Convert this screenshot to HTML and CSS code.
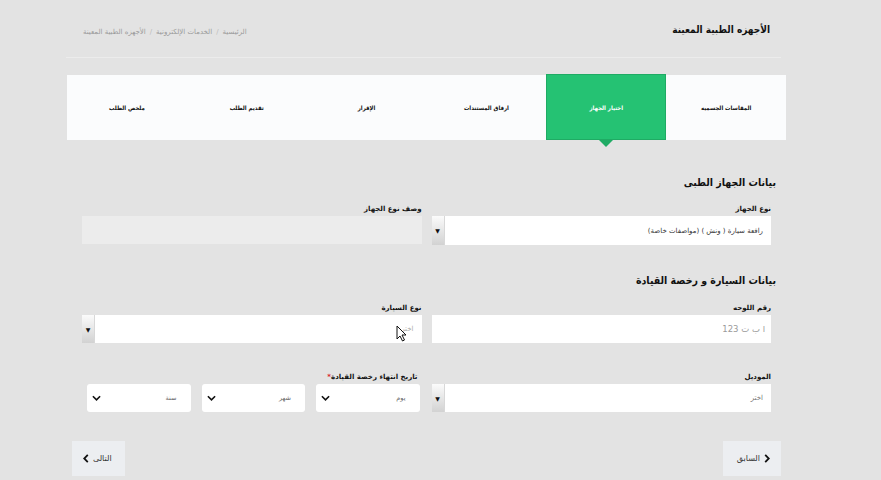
FILE: index.html
```html
<!DOCTYPE html>
<html lang="ar" dir="rtl">
<head>
<meta charset="utf-8">
<title>الأجهزه الطبية المعينة</title>
<link rel="stylesheet" href="styles.css">
</head>
<body>
<div class="page">
  <header class="top">
    <h1 class="title">الأجهزه الطبية المعينة</h1>
    <nav class="crumbs">
      <span>الرئيسية</span><span class="sep">/</span><span>الخدمات الإلكترونية</span><span class="sep">/</span><span>الأجهزه الطبية المعينة</span>
    </nav>
  </header>

  <ol class="steps">
    <li>المقاسات الجسميه</li>
    <li class="active">اختيار الجهاز</li>
    <li>ارفاق المستندات</li>
    <li>الإقرار</li>
    <li>تقديم الطلب</li>
    <li>ملخص الطلب</li>
  </ol>

  <section class="form">
    <h2 class="heading">بيانات الجهاز الطبى</h2>
    <div class="row row-first">
      <div class="field">
        <label class="label">نوع الجهاز</label>
        <div class="combo">
          <span class="value">رافعة سيارة ( ونش ) (مواصفات خاصة)</span>
          <span class="combo-btn">▼</span>
        </div>
      </div>
      <div class="field">
        <label class="label">وصف نوع الجهاز</label>
        <div class="input disabled"></div>
      </div>
    </div>

    <h2 class="heading heading-second">بيانات السيارة و رخصة القيادة</h2>
    <div class="row row-second">
      <div class="field">
        <label class="label">رقم اللوحه</label>
        <div class="input"><span class="placeholder">ا ب ت 123</span></div>
      </div>
      <div class="field">
        <label class="label">نوع السيارة</label>
        <div class="combo">
          <span class="value faint">اختر</span>
          <span class="combo-btn">▼</span>
        </div>
      </div>
    </div>

    <div class="row">
      <div class="field">
        <label class="label">الموديل</label>
        <div class="combo">
          <span class="value muted">اختر</span>
          <span class="combo-btn">▼</span>
        </div>
      </div>
      <div class="field">
        <label class="label date-label">تاريخ انتهاء رخصة القيادة<span class="req">*</span></label>
        <div class="dates">
          <div class="dsel"><span>يوم</span><svg class="chev" viewBox="0 0 10 6" width="9" height="6"><path d="M1 1l4 4 4-4" fill="none" stroke="#111" stroke-width="1.8"/></svg></div>
          <div class="dsel"><span>شهر</span><svg class="chev" viewBox="0 0 10 6" width="9" height="6"><path d="M1 1l4 4 4-4" fill="none" stroke="#111" stroke-width="1.8"/></svg></div>
          <div class="dsel"><span>سنة</span><svg class="chev" viewBox="0 0 10 6" width="9" height="6"><path d="M1 1l4 4 4-4" fill="none" stroke="#111" stroke-width="1.8"/></svg></div>
        </div>
      </div>
    </div>
  </section>

  <div class="actions">
    <button class="btn btn-prev"><svg class="bchev" viewBox="0 0 6 10" width="6" height="9"><path d="M1 1l4 4-4 4" fill="none" stroke="#111" stroke-width="2"/></svg><span>السابق</span></button>
    <button class="btn btn-next"><span>التالى</span><svg class="bchev" viewBox="0 0 6 10" width="6" height="9"><path d="M5 1L1 5l4 4" fill="none" stroke="#111" stroke-width="2"/></svg></button>
  </div>

  <svg class="cursor" viewBox="0 0 11 17" width="11" height="17"><path d="M1 1v13l3-3 2.5 5 2-1-2.5-5h4z" fill="#fff" stroke="#111" stroke-width="1"/></svg>
</div>
</body>
</html>
```
FILE: styles.css
```css
html, body {
  margin: 0;
  padding: 0;
}
body {
  background: #e3e3e3;
  font-family: "DejaVu Sans", "Liberation Sans", sans-serif;
  color: #111;
  width: 881px;
  height: 480px;
  overflow: hidden;
}
.page {
  position: relative;
  direction: rtl;
  width: 881px;
  height: 480px;
}
.top {
  margin: 0 100px 0 66px;
  height: 58px;
  padding: 0 11px 0 17px;
  box-sizing: border-box;
  border-bottom: 1px solid #ececec;
  display: flex;
  align-items: center;
  justify-content: space-between;
}
.title {
  margin: 1px 0 0 0;
  font-size: 10px;
  font-stretch: condensed;
  font-weight: bold;
  color: #111;
}
.crumbs {
  margin-top: 7px;
  font-size: 7px;
  color: #9a9a9a;
  display: flex;
  gap: 4px;
}
.crumbs .sep {
  color: #bbb;
}
.steps {
  list-style: none;
  margin: 17px 95px 0 67px;
  padding: 0;
  height: 65px;
  background: #fbfcfd;
  display: flex;
}
.steps li {
  flex: 1;
  display: flex;
  align-items: center;
  justify-content: center;
  font-size: 6px;
  font-stretch: condensed;
  font-weight: bold;
  color: #111;
}
.steps li.active {
  position: relative;
  background: #25c273;
  box-shadow: inset 0 0 0 1px #1fab64;
  color: #fff;
  margin-top: -1px;
}
.steps li.active::after {
  content: "";
  position: absolute;
  bottom: -7px;
  left: 50%;
  transform: translateX(-50%);
  border-left: 7px solid transparent;
  border-right: 7px solid transparent;
  border-top: 7px solid #1fab64;
}
.form {
  margin: 34px 110px 0 82px;
}
.heading {
  margin: 0 -5px 13px 0;
  font-size: 10.5px;
  font-stretch: condensed;
  line-height: 16px;
  font-weight: bold;
  color: #111;
}
.heading-second {
  margin-top: 27px;
  margin-bottom: 14px;
}
.row {
  display: grid;
  grid-template-columns: 1fr 1fr;
  column-gap: 10px;
}
.row-second {
  margin-bottom: 28px;
}
.label {
  display: block;
  height: 12px;
  line-height: 12px;
  margin-bottom: 1px;
  font-size: 7px;
  font-weight: bold;
  color: #111;
}
.req {
  color: #d9262c;
}
.combo, .input {
  height: 28px;
  background: #fff;
  display: flex;
  align-items: center;
  justify-content: space-between;
  box-sizing: border-box;
}
.row-first .combo {
  height: 29px;
}
.input.disabled {
  background: #ececec;
}
.value {
  padding-right: 8px;
  font-size: 7px;
  color: #333;
}
.value.muted {
  color: #777;
}
.value.faint {
  color: #aaa;
}
.placeholder {
  padding-right: 6px;
  font-size: 8.5px;
  color: #9a9a9a;
}
.combo-btn {
  width: 12px;
  align-self: stretch;
  background: linear-gradient(#fbfbfb, #d2d2d2);
  border-right: 1px solid #d8d8d8;
  display: flex;
  align-items: center;
  justify-content: center;
  font-size: 6px;
  color: #111;
}
.dates {
  display: grid;
  grid-template-columns: 1fr 1fr 1fr;
  column-gap: 11px;
  padding: 0 2px 0 5px;
}
.date-label {
  padding-right: 4px;
}
.dsel {
  height: 28px;
  background: #fff;
  border-radius: 3px;
  display: flex;
  align-items: center;
  justify-content: space-between;
  padding: 0 14px 0 5px;
  font-size: 6.5px;
  color: #666;
}
.chev {
  display: block;
}
.actions {
  margin: 29px 100px 0 72px;
  display: flex;
  justify-content: space-between;
}
.btn {
  height: 35px;
  border: 0;
  background: #eceef1;
  font-family: "DejaVu Sans", "Liberation Sans", sans-serif;
  font-size: 8px;
  color: #333;
  display: flex;
  align-items: center;
  gap: 4px;
}
.btn-prev {
  padding: 0 11px 0 14px;
}
.btn-next {
  padding: 0 13px 0 11px;
}
.bchev {
  display: block;
}
.cursor {
  position: absolute;
  left: 396px;
  top: 325px;
}
```
